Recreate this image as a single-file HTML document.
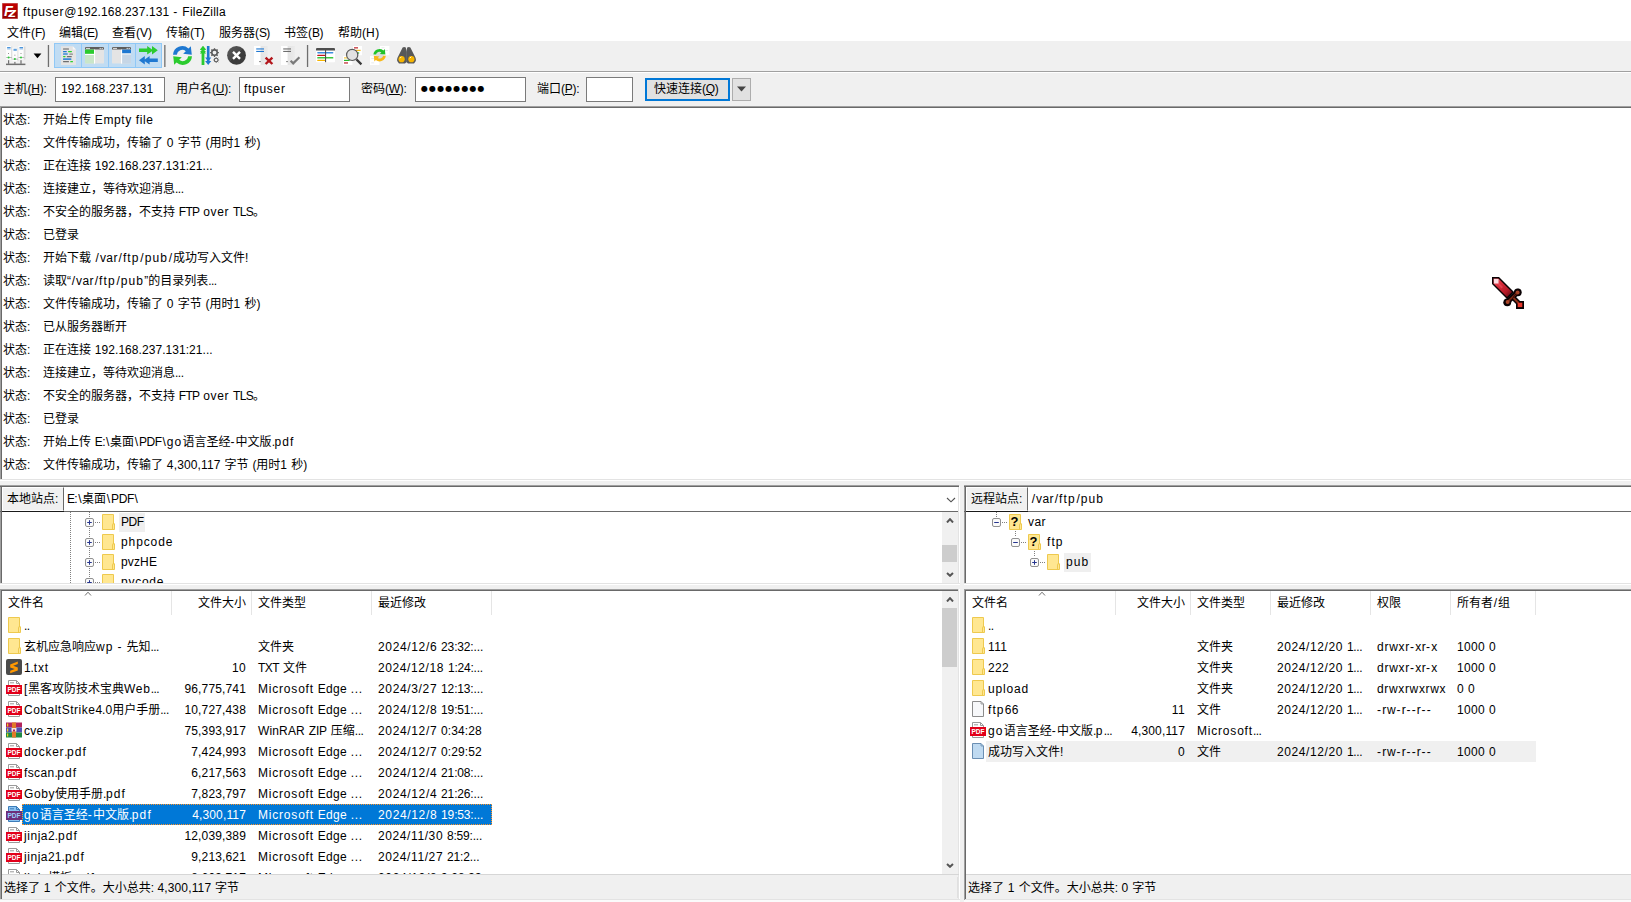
<!DOCTYPE html>
<html lang="zh-CN"><head><meta charset="utf-8"><title>ftpuser@192.168.237.131 - FileZilla</title>
<style>
html,body{margin:0;padding:0}
body{width:1631px;height:902px;position:relative;overflow:hidden;background:#f0f0f0;font-family:"Liberation Sans","Noto Sans CJK SC",sans-serif;font-size:12px;color:#000;line-height:16px}
div,span.t,svg{position:absolute;box-sizing:border-box}
span.t{white-space:nowrap;height:16px;word-spacing:0.5px}
i{font-style:normal}
u{text-decoration:underline;text-underline-offset:1px}
</style></head><body>
<div style="left:0px;top:0px;width:1631px;height:41px;background:#fff;"></div>
<svg style="left:2px;top:3px" width="16" height="16" viewBox="0 0 16 16"><defs><linearGradient id="fzg" x1="0" y1="0" x2="0" y2="1"><stop offset="0" stop-color="#c40000"/><stop offset="1" stop-color="#930000"/></linearGradient></defs><rect x="0.5" y="0.5" width="15" height="15" fill="url(#fzg)" stroke="#a80a0a" stroke-dasharray="1 1"/><g font-family="'Liberation Sans',sans-serif" font-weight="bold" font-style="italic" fill="#fff"><text x="2.100" y="12.600" font-size="14.500">F</text><text transform="translate(6.200 13.800) scale(1.180 1)" font-size="13.600">z</text></g></svg>
<span class="t" style="top:4px;left:23px;"><i style="letter-spacing:0.65px">ftpuser@</i><i style="letter-spacing:0.15px">192.168.237.131</i> <i style="letter-spacing:1.2px">-</i> <i style="letter-spacing:0.25px">FileZilla</i></span>
<span class="t" style="top:25px;left:7px;">文件<i style="letter-spacing:-0.05px">(</i><i style="letter-spacing:-0.7px">F</i><i style="letter-spacing:-0.05px">)</i></span>
<span class="t" style="top:25px;left:59px;">编辑<i style="letter-spacing:-0.05px">(</i><i style="letter-spacing:-0.7px">E</i><i style="letter-spacing:-0.05px">)</i></span>
<span class="t" style="top:25px;left:112px;">查看<i style="letter-spacing:-0.05px">(</i><i style="letter-spacing:0.1px">V</i><i style="letter-spacing:-0.05px">)</i></span>
<span class="t" style="top:25px;left:166px;">传输<i style="letter-spacing:-0.05px">(</i><i style="letter-spacing:-0.5px">T</i><i style="letter-spacing:-0.05px">)</i></span>
<span class="t" style="top:25px;left:219px;">服务器<i style="letter-spacing:-0.05px">(</i><i style="letter-spacing:-0.7px">S</i><i style="letter-spacing:-0.05px">)</i></span>
<span class="t" style="top:25px;left:284px;">书签<i style="letter-spacing:-0.05px">(</i><i style="letter-spacing:-0.55px">B</i><i style="letter-spacing:-0.05px">)</i></span>
<span class="t" style="top:25px;left:338px;">帮助<i style="letter-spacing:-0.05px">(</i><i style="letter-spacing:0.6px">H</i><i style="letter-spacing:-0.05px">)</i></span>
<div style="left:0px;top:41px;width:1631px;height:30px;background:#f0f0f0;"></div>
<div style="left:0px;top:71px;width:1631px;height:1px;background:#a0a0a0;"></div>
<div style="left:0px;top:72px;width:1631px;height:1px;background:#fff;"></div>
<div style="left:54px;top:43px;width:108px;height:25px;background:#c0dcf3;border:1px solid #90c8f6;"></div>
<div style="left:80.5px;top:43px;width:1.5px;height:25px;background:#90c8f6;"></div>
<div style="left:107.5px;top:43px;width:1.5px;height:25px;background:#90c8f6;"></div>
<div style="left:134.5px;top:43px;width:1.5px;height:25px;background:#90c8f6;"></div>
<svg style="left:0;top:41px" width="430" height="30" viewBox="0 41 430 30"><defs><linearGradient id="sv" x1="0" x2="1" y1="0" y2="0"><stop offset="0.45" stop-color="#fff"/><stop offset="0.5" stop-color="#e4e4e4"/><stop offset="1" stop-color="#ebebeb"/></linearGradient><linearGradient id="cg" x1="0" x2="1" y1="0" y2="1"><stop offset="0" stop-color="#5a5a5a"/><stop offset="0.5" stop-color="#4a4a4a"/><stop offset="0.5" stop-color="#3c3c3c"/><stop offset="1" stop-color="#3a3a3a"/></linearGradient></defs><rect x="47.8" y="45" width="1.3" height="22" fill="#6e6e6e"/><rect x="164.2" y="45" width="1.3" height="22" fill="#6e6e6e"/><rect x="306.9" y="45" width="1.3" height="22" fill="#6e6e6e"/><rect x="11.1" y="46.5" width="1.2" height="13" fill="#dadada"/><rect x="6.1" y="46" width="5" height="13.500" fill="#fdfdfd"/><rect x="7.1" y="47.1" width="3.5" height="1" fill="#3a8ad6"/><rect x="7.1" y="48.5" width="3.5" height="0.8" fill="#5a9ee0"/><rect x="8.2" y="53" width="0.8" height="1" fill="#777"/><rect x="6.1" y="57" width="5.8" height="0.9" fill="#b4b4b4"/><circle cx="8.6" cy="57.4" r="1" fill="#2ec83a"/><rect x="8.0" y="60.2" width="1.200" height="3.6" fill="#707070"/><rect x="17.3" y="48.2" width="1.2" height="13" fill="#dadada"/><rect x="12.5" y="47.7" width="4.8" height="13.500" fill="#fdfdfd"/><rect x="13.5" y="48.800000000000004" width="3.3" height="1" fill="#3a8ad6"/><rect x="13.5" y="50.2" width="3.3" height="0.8" fill="#5a9ee0"/><rect x="14.5" y="54.7" width="0.8" height="1" fill="#777"/><rect x="12.5" y="58.7" width="5.6" height="0.9" fill="#b4b4b4"/><circle cx="14.9" cy="59.1" r="1" fill="#2ec83a"/><rect x="14.3" y="61.900000000000006" width="1.200" height="1.9" fill="#707070"/><rect x="23.5" y="46.5" width="2" height="13" fill="#dadada"/><rect x="18.5" y="46" width="5" height="13.500" fill="#fdfdfd"/><rect x="19.5" y="47.1" width="3.5" height="1" fill="#3a8ad6"/><rect x="19.5" y="48.5" width="3.5" height="0.8" fill="#5a9ee0"/><rect x="20.6" y="53" width="0.8" height="1" fill="#777"/><rect x="18.5" y="57" width="5.8" height="0.9" fill="#b4b4b4"/><circle cx="21.0" cy="57.4" r="1" fill="#2ec83a"/><rect x="20.4" y="60.2" width="1.200" height="3.6" fill="#707070"/><rect x="6" y="63.600" width="19.400" height="1.500" fill="#707070"/><path d="M33.600 53.600h7.800l-3.900 4.600z" fill="#000"/><path d="M61 46.200h11.800l3.200 3.200v15.600H61z" fill="#e4e4e4"/><path d="M72.800 46.200v3.200H76z" fill="#f8f8f8"/><rect x="63" y="48.300" width="6" height="1.500" rx="0.5" fill="#8a8a8a"/><rect x="63" y="50.900" width="3.800" height="1.300" rx="0.5" fill="#1f78d1"/><rect x="68" y="50.900" width="4" height="1.300" rx="0.6" fill="#2bd02f"/><rect x="63" y="53.200" width="4.800" height="1.600" rx="0.5" fill="#3a8ad6"/><rect x="69.300" y="53.400" width="3.700" height="1.400" rx="0.5" fill="#8a8a8a"/><rect x="63" y="55.900" width="2.600" height="1.300" rx="0.6" fill="#2bd02f"/><rect x="66.800" y="55.900" width="5" height="1.300" rx="0.5" fill="#6e6e6e"/><rect x="63" y="58.300" width="8.400" height="1.600" rx="0.5" fill="#3a8ad6"/><rect x="63" y="61" width="6" height="1.300" rx="0.5" fill="#6e6e6e"/><rect x="70.200" y="61" width="2.800" height="1.300" rx="0.6" fill="#2bd02f"/><rect x="85" y="47" width="19" height="16.600" rx="1.200" fill="#e4e4e4"/><path d="M85 49.600v-1.400q0-1.200 1.200-1.200h16.600q1.200 0 1.200 1.200v1.400z" fill="#5c5c5c"/><rect x="86" y="47.900" width="4" height="0.900" fill="#eee"/><rect x="99.500" y="47.900" width="1.500" height="0.900" fill="#ddd"/><rect x="101.500" y="47.900" width="1.500" height="0.900" fill="#ddd"/><rect x="85" y="49.600" width="9" height="4.300" fill="#2bcb2f"/><rect x="85" y="53.900" width="9" height="1.100" fill="#fff"/><path d="M85 55h9v8.600h-7.800q-1.200 0-1.200-1.200z" fill="#c9e6c9"/><rect x="94" y="49.600" width="1.100" height="14" fill="#fff"/><rect x="112" y="47" width="19" height="16.600" rx="1.200" fill="#e4e4e4"/><path d="M112 49.600v-1.400q0-1.200 1.200-1.200h16.600q1.200 0 1.200 1.200v1.400z" fill="#5c5c5c"/><rect x="113" y="47.900" width="4" height="0.900" fill="#eee"/><rect x="126.500" y="47.900" width="1.500" height="0.900" fill="#ddd"/><rect x="128.500" y="47.900" width="1.500" height="0.900" fill="#ddd"/><rect x="122" y="49.600" width="9" height="3.900" fill="#1f78d1"/><rect x="122" y="53.500" width="9" height="1.100" fill="#fff"/><path d="M122 54.600h9v7.800q0 1.200-1.200 1.200H122z" fill="#c6d6e6"/><rect x="121" y="49.600" width="1.100" height="14" fill="#fff"/><path d="M139 48.600h8.200v-2.600l4.800 3.400v-3.400l5.800 4.300-5.800 4.300v-3.400l-4.800 3.400v-2.600h-8.200z" fill="#2bcb2f"/><path d="M157.800 58.600h-8.200v-2.600l-4.800 3.400v-3.400l-5.800 4.300 5.800 4.300v-3.400l4.800 3.400v-2.600h8.200z" fill="#1f78d1"/><path d="M173 54.800a9.300 9.300 0 0 1 15.500-6.300l2.300-2.300 1 8.600-8.600-1 2.600-2.600a5.500 5.500 0 0 0-9 3.600z" fill="#1f78d1"/><path d="M192 56.200a9.300 9.300 0 0 1-15.500 6.300l-2.300 2.300-1-8.600 8.600 1-2.600 2.600a5.500 5.500 0 0 0 9-3.600z" fill="#2bcb2f"/><path d="M203 46l3 3.600h-1.600v2.400H206l-1.600-1.800v14.800h-2.800V50.200L200 52h1.600v-2.400H200z" fill="#2bcb2f"/><path d="M203 46l3.100 4h-6.200z M203 49.500l3.100 4h-6.200z" fill="#2bcb2f"/><rect x="206.900" y="46" width="2.600" height="15" fill="#1f78d1"/><path d="M208.200 65l-3.100-4h6.200z M208.200 61.500l-3.100-4h6.200z" fill="#1f78d1"/><circle cx="214.5" cy="52.6" r="2.73" fill="none" stroke="#5a5a5a" stroke-width="1.58"/><line x1="217.58" y1="52.60" x2="218.90" y2="52.60" stroke="#5a5a5a" stroke-width="1.32"/><line x1="216.68" y1="54.78" x2="217.61" y2="55.71" stroke="#5a5a5a" stroke-width="1.32"/><line x1="214.50" y1="55.68" x2="214.50" y2="57.00" stroke="#5a5a5a" stroke-width="1.32"/><line x1="212.32" y1="54.78" x2="211.39" y2="55.71" stroke="#5a5a5a" stroke-width="1.32"/><line x1="211.42" y1="52.60" x2="210.10" y2="52.60" stroke="#5a5a5a" stroke-width="1.32"/><line x1="212.32" y1="50.42" x2="211.39" y2="49.49" stroke="#5a5a5a" stroke-width="1.32"/><line x1="214.50" y1="49.52" x2="214.50" y2="48.20" stroke="#5a5a5a" stroke-width="1.32"/><line x1="216.68" y1="50.42" x2="217.61" y2="49.49" stroke="#5a5a5a" stroke-width="1.32"/><circle cx="216.2" cy="60" r="1.80" fill="none" stroke="#5a5a5a" stroke-width="1.04"/><line x1="218.23" y1="60.00" x2="219.10" y2="60.00" stroke="#5a5a5a" stroke-width="0.87"/><line x1="217.64" y1="61.44" x2="218.25" y2="62.05" stroke="#5a5a5a" stroke-width="0.87"/><line x1="216.20" y1="62.03" x2="216.20" y2="62.90" stroke="#5a5a5a" stroke-width="0.87"/><line x1="214.76" y1="61.44" x2="214.15" y2="62.05" stroke="#5a5a5a" stroke-width="0.87"/><line x1="214.17" y1="60.00" x2="213.30" y2="60.00" stroke="#5a5a5a" stroke-width="0.87"/><line x1="214.76" y1="58.56" x2="214.15" y2="57.95" stroke="#5a5a5a" stroke-width="0.87"/><line x1="216.20" y1="57.97" x2="216.20" y2="57.10" stroke="#5a5a5a" stroke-width="0.87"/><line x1="217.64" y1="58.56" x2="218.25" y2="57.95" stroke="#5a5a5a" stroke-width="0.87"/><circle cx="236.500" cy="55.300" r="9.400" fill="url(#cg)"/><path d="M233 51.800l7 7M240 51.800l-7 7" stroke="#fff" stroke-width="2.400" stroke-linecap="butt"/><rect x="254" y="46" width="13.800" height="19" fill="url(#sv)"/><rect x="256.200" y="48.400" width="7.800" height="1.100" fill="#1f78d1"/><rect x="256.200" y="50.900" width="7.800" height="1.100" fill="#1f78d1"/><circle cx="260" cy="61.600" r="0.700" fill="#333"/><path d="M265.600 57.600l6.800 6.400M272.400 57.600l-6.800 6.400" stroke="#b3151b" stroke-width="2.400"/><rect x="281" y="46" width="13.800" height="19" fill="url(#sv)"/><rect x="283.200" y="48.400" width="7.800" height="1.100" fill="#6e6e6e"/><rect x="283.200" y="50.900" width="7.800" height="1.100" fill="#6e6e6e"/><circle cx="287" cy="61.600" r="0.700" fill="#333"/><path d="M290.600 60.800l2.600 2.600 6.200-6.200" stroke="#7a7a7a" stroke-width="2.200" fill="none"/><rect x="316" y="48" width="19" height="14.200" rx="0.800" fill="#fff"/><path d="M316 50.600v-1.600q0-1 1-1h17q1 0 1 1v1.600z" fill="#4e4e4e"/><rect x="317.200" y="52" width="16.200" height="1.500" rx="0.700" fill="#3a8ee0"/><rect x="317.200" y="54.700" width="8" height="1.300" rx="0.600" fill="#c4161c"/><rect x="317.200" y="57.100" width="16.200" height="1.500" rx="0.700" fill="#3cc83f"/><rect x="317.200" y="59.800" width="8" height="1.300" rx="0.600" fill="#f7b400"/><rect x="325" y="50" width="1.100" height="12.200" fill="#4e4e4e"/><rect x="353" y="46" width="9" height="9.200" fill="#fff"/><rect x="354" y="47.200" width="4" height="1.300" fill="#c4343a"/><rect x="356" y="49.800" width="4.600" height="1.100" fill="#f7b400"/><rect x="357" y="52.300" width="2.200" height="1.300" fill="#3cc83f"/><rect x="343" y="56" width="9.400" height="9" fill="#fff"/><rect x="344" y="57.300" width="3" height="1.200" fill="#f7c840"/><rect x="344" y="59.800" width="5.600" height="1.200" fill="#2bb82f"/><rect x="344" y="62.300" width="4" height="1.300" fill="#c4343a"/><circle cx="352.200" cy="54.900" r="5.600" fill="#e2e2e2" stroke="#5a5a5a" stroke-width="1.200"/><path d="M356.400 59.400l5 5" stroke="#3a3a3a" stroke-width="2.200"/><rect x="380" y="46" width="9.400" height="9.200" fill="#fff"/><rect x="381.500" y="47.400" width="3" height="0.800" fill="#e4e4e4"/><rect x="385" y="50" width="3" height="0.800" fill="#e4e4e4"/><rect x="370" y="56" width="9.400" height="9" fill="#fff"/><rect x="371.200" y="58" width="3" height="0.800" fill="#e4e4e4"/><rect x="371.200" y="62.500" width="3" height="0.800" fill="#e4e4e4"/><circle cx="379.600" cy="55.200" r="4" fill="#dcdcdc"/><path d="M373.400 54.600a6.200 6.200 0 0 1 10-4.200l1.400-1.400.6 5.600-5.600-.6 1.600-1.600a3.600 3.600 0 0 0-5.400 2.200z" fill="#22c32a"/><path d="M385.800 55.800a6.200 6.200 0 0 1-10 4.200l-1.400 1.400-.6-5.600 5.600.6-1.600 1.600a3.600 3.600 0 0 0 5.400-2.200z" fill="#f7b818"/><path d="M402.600 47.600Q404.200 46.600 405.800 47.600L406.700 52V62L405 63.400H399L397.200 61Q396.800 59 397.600 57.400Z" fill="#585858"/><path d="M410.400 47.600Q408.800 46.600 407.200 47.600L406.300 52V62L408 63.400H414L415.800 61Q416.200 59 415.400 57.400Z" fill="#585858"/><circle cx="401.600" cy="59.200" r="3.100" fill="#f7b500"/><circle cx="411.400" cy="59.200" r="3.100" fill="#f7b500"/><path d="M400 58.200l1.400-1.400M409.800 58.200l1.400-1.400" stroke="#fff" stroke-width="0.900"/></svg>
<span class="t" style="top:81px;left:3.5px;">主机<i style="letter-spacing:-0.25px">(<u>H</u>):</i></span>
<div style="left:55px;top:77px;width:110px;height:25px;background:#fff;border:1px solid #7a7a7a;"></div>
<span class="t" style="top:81px;left:61px;"><i style="letter-spacing:0.15px">192.168.237.131</i></span>
<span class="t" style="top:81px;left:176px;">用户名<i style="letter-spacing:-0.25px">(<u>U</u>):</i></span>
<div style="left:239px;top:77px;width:111px;height:25px;background:#fff;border:1px solid #7a7a7a;"></div>
<span class="t" style="top:81px;left:244px;"><i style="letter-spacing:0.7px">ftpuser</i></span>
<span class="t" style="top:81px;left:361px;">密码<i style="letter-spacing:-0.25px">(<u>W</u>):</i></span>
<div style="left:415px;top:77px;width:111px;height:25px;background:#fff;border:1px solid #7a7a7a;"></div>
<span class="t" style="top:80.5px;left:421px;font-size:8px;letter-spacing:1.1px;font-family:'DejaVu Sans',sans-serif;">●●●●●●●●</span>
<span class="t" style="top:81px;left:537px;">端口<i style="letter-spacing:-0.25px">(<u>P</u>):</i></span>
<div style="left:586px;top:77px;width:47px;height:25px;background:#fff;border:1px solid #7a7a7a;"></div>
<div style="left:645px;top:78px;width:85px;height:23px;background:#e1e1e1;border:2px solid #0078d7;"></div>
<span class="t" style="top:81px;left:654px;">快速连接<i style="letter-spacing:-0.25px">(<u>Q</u>)</i></span>
<div style="left:732px;top:78px;width:19px;height:23px;background:#e1e1e1;border:1px solid #adadad;"></div>
<svg style="left:736px;top:86px" width="11" height="6" viewBox="0 0 11 6"><path d="M1 0.5h9L5.5 5.5z" fill="#444"/></svg>
<div style="left:0px;top:106px;width:1631px;height:1px;background:#a0a0a0;"></div>
<div style="left:0px;top:107px;width:1631px;height:1px;background:#696969;"></div>
<div style="left:0px;top:107px;width:1px;height:372px;background:#a0a0a0;"></div>
<div style="left:1px;top:108px;width:1px;height:371px;background:#696969;"></div>
<div style="left:2px;top:108px;width:1629px;height:371px;background:#fff;"></div>
<span class="t" style="top:112px;left:3px;">状态<i style="letter-spacing:-0.5px">:</i></span>
<span class="t" style="top:112px;left:43px;">开始上传 <i style="letter-spacing:0.6px">Empty</i> <i style="letter-spacing:0.6px">file</i></span>
<span class="t" style="top:135px;left:3px;">状态<i style="letter-spacing:-0.5px">:</i></span>
<span class="t" style="top:135px;left:43px;">文件传输成功，传输了 <i style="letter-spacing:0.35px">0</i> 字节 <i style="letter-spacing:-0.05px">(</i>用时<i style="letter-spacing:0.35px">1</i> 秒<i style="letter-spacing:-0.05px">)</i></span>
<span class="t" style="top:158px;left:3px;">状态<i style="letter-spacing:-0.5px">:</i></span>
<span class="t" style="top:158px;left:43px;">正在连接 <i style="letter-spacing:0.05px">192.168.237.131:21...</i></span>
<span class="t" style="top:181px;left:3px;">状态<i style="letter-spacing:-0.5px">:</i></span>
<span class="t" style="top:181px;left:43px;">连接建立，等待欢迎消息<i style="letter-spacing:-0.5px">...</i></span>
<span class="t" style="top:204px;left:3px;">状态<i style="letter-spacing:-0.5px">:</i></span>
<span class="t" style="top:204px;left:43px;">不安全的服务器，不支持 <i style="letter-spacing:-0.7px">FTP</i> <i style="letter-spacing:0.65px">over</i> <i style="letter-spacing:-0.7px">TLS</i>。</span>
<span class="t" style="top:227px;left:3px;">状态<i style="letter-spacing:-0.5px">:</i></span>
<span class="t" style="top:227px;left:43px;">已登录</span>
<span class="t" style="top:250px;left:3px;">状态<i style="letter-spacing:-0.5px">:</i></span>
<span class="t" style="top:250px;left:43px;">开始下载 <i style="letter-spacing:1.75px;margin:0 -0.7px 0 0.7px">/</i><i style="letter-spacing:0.4px">var</i><i style="letter-spacing:1.75px;margin:0 -0.7px 0 0.7px">/</i><i style="letter-spacing:1.1px">ftp</i><i style="letter-spacing:1.75px;margin:0 -0.7px 0 0.7px">/</i><i style="letter-spacing:1.1px">pub</i><i style="letter-spacing:1.75px;margin:0 -0.7px 0 0.7px">/</i>成功写入文件<i style="letter-spacing:0.35px">!</i></span>
<span class="t" style="top:273px;left:3px;">状态<i style="letter-spacing:-0.5px">:</i></span>
<span class="t" style="top:273px;left:43px;">读取“<i style="letter-spacing:1.75px;margin:0 -0.7px 0 0.7px">/</i><i style="letter-spacing:0.4px">var</i><i style="letter-spacing:1.75px;margin:0 -0.7px 0 0.7px">/</i><i style="letter-spacing:1.1px">ftp</i><i style="letter-spacing:1.75px;margin:0 -0.7px 0 0.7px">/</i><i style="letter-spacing:1.1px">pub</i>”的目录列表<i style="letter-spacing:-0.5px">...</i></span>
<span class="t" style="top:296px;left:3px;">状态<i style="letter-spacing:-0.5px">:</i></span>
<span class="t" style="top:296px;left:43px;">文件传输成功，传输了 <i style="letter-spacing:0.35px">0</i> 字节 <i style="letter-spacing:-0.05px">(</i>用时<i style="letter-spacing:0.35px">1</i> 秒<i style="letter-spacing:-0.05px">)</i></span>
<span class="t" style="top:319px;left:3px;">状态<i style="letter-spacing:-0.5px">:</i></span>
<span class="t" style="top:319px;left:43px;">已从服务器断开</span>
<span class="t" style="top:342px;left:3px;">状态<i style="letter-spacing:-0.5px">:</i></span>
<span class="t" style="top:342px;left:43px;">正在连接 <i style="letter-spacing:0.05px">192.168.237.131:21...</i></span>
<span class="t" style="top:365px;left:3px;">状态<i style="letter-spacing:-0.5px">:</i></span>
<span class="t" style="top:365px;left:43px;">连接建立，等待欢迎消息<i style="letter-spacing:-0.5px">...</i></span>
<span class="t" style="top:388px;left:3px;">状态<i style="letter-spacing:-0.5px">:</i></span>
<span class="t" style="top:388px;left:43px;">不安全的服务器，不支持 <i style="letter-spacing:-0.7px">FTP</i> <i style="letter-spacing:0.65px">over</i> <i style="letter-spacing:-0.7px">TLS</i>。</span>
<span class="t" style="top:411px;left:3px;">状态<i style="letter-spacing:-0.5px">:</i></span>
<span class="t" style="top:411px;left:43px;">已登录</span>
<span class="t" style="top:434px;left:3px;">状态<i style="letter-spacing:-0.5px">:</i></span>
<span class="t" style="top:434px;left:43px;">开始上传 <i style="letter-spacing:-0.7px">E</i><i style="letter-spacing:0.55px">:\</i>桌面<i style="letter-spacing:1.6px;margin:0 -0.7px 0 0.7px">\</i><i style="letter-spacing:-0.4px">PDF</i><i style="letter-spacing:1.6px;margin:0 -0.7px 0 0.7px">\</i><i style="letter-spacing:1.2px">go</i>语言圣经<i style="letter-spacing:1.2px">-</i>中文版<i style="letter-spacing:-0.5px">.</i><i style="letter-spacing:1.1px">pdf</i></span>
<span class="t" style="top:457px;left:3px;">状态<i style="letter-spacing:-0.5px">:</i></span>
<span class="t" style="top:457px;left:43px;">文件传输成功，传输了 <i style="letter-spacing:0.15px">4,300,117</i> 字节 <i style="letter-spacing:-0.05px">(</i>用时<i style="letter-spacing:0.35px">1</i> 秒<i style="letter-spacing:-0.05px">)</i></span>
<svg style="left:1490px;top:275px" width="36" height="36" viewBox="0 0 36 36"><defs><linearGradient id="bl" x1="0" y1="0" x2="1" y2="1"><stop offset="0" stop-color="#f4707c"/><stop offset="0.3" stop-color="#dc2f3c"/><stop offset="0.7" stop-color="#b41a28"/><stop offset="1" stop-color="#4e060e"/></linearGradient></defs><path d="M2 2h7l15 15-7 7L2 9z" fill="#0a0204"/><path d="M3.500 3.500h4.900L22 17l-5 5L3.500 8.400z" fill="url(#bl)"/><path d="M5 4l8 8-1.500 1.500L4 5.500z" fill="#ee5260" opacity="0.6"/><rect x="4" y="4" width="4.500" height="4.500" fill="#fcdde2"/><path d="M16.500 27.700L28.100 16.600" stroke="#0a0204" stroke-width="5.500" stroke-linecap="round"/><circle cx="17.300" cy="27.300" r="3.900" fill="#0a0204"/><circle cx="27.800" cy="17.300" r="3.900" fill="#0a0204"/><path d="M23 22.500l7 7" stroke="#0a0204" stroke-width="5"/><rect x="26" y="26" width="8" height="8" fill="#0a0204"/><path d="M17.500 27L27.500 17.500" stroke="#7a2814" stroke-width="2" stroke-linecap="round"/><circle cx="17.600" cy="27" r="2" fill="#a84428"/><circle cx="27.600" cy="17.500" r="2" fill="#a84428"/><path d="M20 25.500q3-1 3.500-3.500t3-3" stroke="#3a0c06" stroke-width="1" fill="none"/><path d="M23.500 23l5 5" stroke="#8c3018" stroke-width="2"/><rect x="27.700" y="27.700" width="4.600" height="4.400" fill="#e8382c"/></svg>
<div style="left:0px;top:479px;width:1631px;height:1px;background:#e3e3e3;"></div>
<div style="left:0px;top:480px;width:1631px;height:1px;background:#fff;"></div>
<div style="left:0px;top:481px;width:1631px;height:4px;background:#f0f0f0;"></div>
<div style="left:0px;top:485px;width:959px;height:1px;background:#a0a0a0;"></div>
<div style="left:0px;top:486px;width:959px;height:1px;background:#696969;"></div>
<div style="left:0px;top:487px;width:1px;height:413px;background:#a0a0a0;"></div>
<div style="left:1px;top:487px;width:1px;height:412px;background:#696969;"></div>
<div style="left:2px;top:487px;width:62px;height:24px;background:#f0f0f0;border-left:1px solid #fff;border-top:1px solid #fff;border-bottom:1px solid #fff;border-right:1px solid #696969;"></div>
<div style="left:64px;top:487px;width:894px;height:24px;background:#fff;"></div>
<div style="left:0px;top:511px;width:959px;height:1px;background:#696969;"></div>
<div style="left:2px;top:511px;width:62px;height:1px;background:#1a1a1a;"></div>
<div style="left:958px;top:487px;width:1px;height:413px;background:#e3e3e3;"></div>
<div style="left:959px;top:486px;width:1px;height:414px;background:#fff;"></div>
<span class="t" style="top:491px;left:7px;">本地站点<i style="letter-spacing:-0.5px">:</i></span>
<span class="t" style="top:491px;left:67px;"><i style="letter-spacing:-0.7px">E</i><i style="letter-spacing:0.55px">:\</i>桌面<i style="letter-spacing:1.6px;margin:0 -0.7px 0 0.7px">\</i><i style="letter-spacing:-0.4px">PDF</i><i style="letter-spacing:1.6px;margin:0 -0.7px 0 0.7px">\</i></span>
<svg style="left:946px;top:497px" width="10" height="6.0" viewBox="0 0 10 6.0"><path d="M1 1L5.0 4.8L9 1" fill="none" stroke="#505050" stroke-width="1.1"/></svg>
<div style="left:0px;top:512px;width:2px;height:71px;border-left:1px solid #a0a0a0;background:#696969;"></div>
<div style="left:2px;top:512px;width:940px;height:71px;background:#fff;"></div>
<div style="left:0px;top:583px;width:959px;height:1px;background:#e3e3e3;"></div>
<div style="left:0px;top:584px;width:959px;height:1px;background:#fff;"></div>
<div style="left:942px;top:512px;width:16px;height:71px;background:#f0f0f0;"></div>
<div style="left:942px;top:545px;width:15px;height:17px;background:#cdcdcd;"></div>
<svg style="left:945.5px;top:517.5px" width="8" height="5.0" viewBox="0 0 8 5.0"><path d="M1 4.5L4.0 1.2L7 4.5" fill="none" stroke="#555" stroke-width="2"/></svg>
<svg style="left:945.5px;top:571.5px" width="8" height="5.0" viewBox="0 0 8 5.0"><path d="M1 1L4.0 3.8L7 1" fill="none" stroke="#555" stroke-width="2"/></svg>
<div style="left:70px;top:512px;width:1px;height:71px;background:repeating-linear-gradient(to bottom,#808080 0 1px,transparent 1px 2px);"></div>
<div style="left:89px;top:512px;width:1px;height:71px;background:repeating-linear-gradient(to bottom,#808080 0 1px,transparent 1px 2px);"></div>
<div style="left:2px;top:512px;width:940px;height:71px;overflow:hidden">
<div style="left:117px;top:0.5px;width:26px;height:19px;background:#efefef;"></div>
<div style="left:85px;top:5.5px;width:10px;height:10px;background:#fff;"></div>
<svg style="left:83px;top:6.0px" width="9" height="9" viewBox="0 0 9 9"><rect x="0.500" y="0.500" width="8" height="8" rx="1.500" fill="#fafafa" stroke="#919191"/><path d="M2.200 4.500h4.600" stroke="#26358f" stroke-width="1"/><path d="M4.500 2.200v4.600" stroke="#26358f" stroke-width="1"/></svg>
<div style="left:93px;top:10.0px;width:6px;height:1px;background:repeating-linear-gradient(to right,#808080 0 1px,transparent 1px 2px);"></div>
<svg style="left:100px;top:2.0px" width="13" height="16" viewBox="0 0 13 16"><path d="M0.5 0.5h11v9.500h1v5.500h-12z" fill="#ffe791" stroke="#eec94e" stroke-width="1"/><path d="M10.500 15.500v-5q0-.8 .8-.8h1.200" fill="none" stroke="#eec94e"/></svg>
<span class="t" style="left:119px;top:2.0px"><i style="letter-spacing:-0.4px">PDF</i></span>
<div style="left:85px;top:25.5px;width:10px;height:10px;background:#fff;"></div>
<svg style="left:83px;top:26.0px" width="9" height="9" viewBox="0 0 9 9"><rect x="0.500" y="0.500" width="8" height="8" rx="1.500" fill="#fafafa" stroke="#919191"/><path d="M2.200 4.500h4.600" stroke="#26358f" stroke-width="1"/><path d="M4.500 2.200v4.600" stroke="#26358f" stroke-width="1"/></svg>
<div style="left:93px;top:30.0px;width:6px;height:1px;background:repeating-linear-gradient(to right,#808080 0 1px,transparent 1px 2px);"></div>
<svg style="left:100px;top:22.0px" width="13" height="16" viewBox="0 0 13 16"><path d="M0.5 0.5h11v9.500h1v5.500h-12z" fill="#ffe791" stroke="#eec94e" stroke-width="1"/><path d="M10.500 15.500v-5q0-.8 .8-.8h1.200" fill="none" stroke="#eec94e"/></svg>
<span class="t" style="left:119px;top:22.0px"><i style="letter-spacing:0.9px">phpcode</i></span>
<div style="left:85px;top:45.5px;width:10px;height:10px;background:#fff;"></div>
<svg style="left:83px;top:46.0px" width="9" height="9" viewBox="0 0 9 9"><rect x="0.500" y="0.500" width="8" height="8" rx="1.500" fill="#fafafa" stroke="#919191"/><path d="M2.200 4.500h4.600" stroke="#26358f" stroke-width="1"/><path d="M4.500 2.200v4.600" stroke="#26358f" stroke-width="1"/></svg>
<div style="left:93px;top:50.0px;width:6px;height:1px;background:repeating-linear-gradient(to right,#808080 0 1px,transparent 1px 2px);"></div>
<svg style="left:100px;top:42.0px" width="13" height="16" viewBox="0 0 13 16"><path d="M0.5 0.5h11v9.500h1v5.500h-12z" fill="#ffe791" stroke="#eec94e" stroke-width="1"/><path d="M10.500 15.500v-5q0-.8 .8-.8h1.200" fill="none" stroke="#eec94e"/></svg>
<span class="t" style="left:119px;top:42.0px"><i style="letter-spacing:0.15px">pvzHE</i></span>
<div style="left:85px;top:65.5px;width:10px;height:10px;background:#fff;"></div>
<svg style="left:83px;top:66.0px" width="9" height="9" viewBox="0 0 9 9"><rect x="0.500" y="0.500" width="8" height="8" rx="1.500" fill="#fafafa" stroke="#919191"/><path d="M2.200 4.500h4.600" stroke="#26358f" stroke-width="1"/><path d="M4.500 2.200v4.600" stroke="#26358f" stroke-width="1"/></svg>
<div style="left:93px;top:70.0px;width:6px;height:1px;background:repeating-linear-gradient(to right,#808080 0 1px,transparent 1px 2px);"></div>
<svg style="left:100px;top:62.0px" width="13" height="16" viewBox="0 0 13 16"><path d="M0.5 0.5h11v9.500h1v5.500h-12z" fill="#ffe791" stroke="#eec94e" stroke-width="1"/><path d="M10.500 15.500v-5q0-.8 .8-.8h1.200" fill="none" stroke="#eec94e"/></svg>
<span class="t" style="left:119px;top:62.0px"><i style="letter-spacing:0.75px">pycode</i></span>
</div>
<div style="left:0px;top:585px;width:1631px;height:4px;background:#f0f0f0;"></div>
<div style="left:0px;top:589px;width:959px;height:1px;background:#a0a0a0;"></div>
<div style="left:0px;top:590px;width:959px;height:1px;background:#696969;"></div>
<div style="left:0px;top:589px;width:1px;height:310px;background:#a0a0a0;"></div>
<div style="left:1px;top:590px;width:1px;height:309px;background:#696969;"></div>
<div style="left:2px;top:591px;width:940px;height:283px;background:#fff;"></div>
<div style="left:2px;top:874px;width:957px;height:1px;background:#d6d6d6;"></div>
<div style="left:942px;top:591px;width:16px;height:283px;background:#f0f0f0;"></div>
<div style="left:942px;top:608px;width:15px;height:59px;background:#cdcdcd;"></div>
<svg style="left:945.5px;top:596.5px" width="8" height="5.0" viewBox="0 0 8 5.0"><path d="M1 4.5L4.0 1.2L7 4.5" fill="none" stroke="#555" stroke-width="2"/></svg>
<svg style="left:945.5px;top:862.5px" width="8" height="5.0" viewBox="0 0 8 5.0"><path d="M1 1L4.0 3.8L7 1" fill="none" stroke="#555" stroke-width="2"/></svg>
<div style="left:171px;top:591px;width:1px;height:24px;background:#e5e5e5;"></div>
<div style="left:251px;top:591px;width:1px;height:24px;background:#e5e5e5;"></div>
<div style="left:371px;top:591px;width:1px;height:24px;background:#e5e5e5;"></div>
<div style="left:491px;top:591px;width:1px;height:24px;background:#e5e5e5;"></div>
<svg style="left:84px;top:591px" width="8" height="5.0" viewBox="0 0 8 5.0"><path d="M1 4.5L4.0 1.2L7 4.5" fill="none" stroke="#707070" stroke-width="1"/></svg>
<span class="t" style="top:595px;left:8px;">文件名</span>
<span class="t" style="top:595px;right:1385px;">文件大小</span>
<span class="t" style="top:595px;left:258px;">文件类型</span>
<span class="t" style="top:595px;left:378px;">最近修改</span>
<div style="left:2px;top:591px;width:940px;height:283px;overflow:hidden">
<svg style="left:6px;top:26px" width="13" height="16" viewBox="0 0 13 16"><path d="M0.5 0.5h11v9.500h1v5.500h-12z" fill="#ffe791" stroke="#eec94e" stroke-width="1"/><path d="M10.500 15.500v-5q0-.8 .8-.8h1.200" fill="none" stroke="#eec94e"/></svg>
<span class="t" style="left:22px;top:27px;"><i style="letter-spacing:-0.5px">..</i></span>
<svg style="left:6px;top:47px" width="13" height="16" viewBox="0 0 13 16"><path d="M0.5 0.5h11v9.500h1v5.500h-12z" fill="#ffe791" stroke="#eec94e" stroke-width="1"/><path d="M10.500 15.500v-5q0-.8 .8-.8h1.200" fill="none" stroke="#eec94e"/></svg>
<span class="t" style="left:22px;top:48px;">玄机应急响应<i style="letter-spacing:1.1px">wp</i> <i style="letter-spacing:1.2px">-</i> 先知<i style="letter-spacing:-0.5px">...</i></span>
<span class="t" style="left:256px;top:48px;">文件夹</span>
<span class="t" style="left:376px;top:48px;"><i style="letter-spacing:0.65px">2024/12/6</i> <i style="letter-spacing:-0.15px">23:32:...</i></span>
<svg style="left:4px;top:68px" width="16" height="16" viewBox="0 0 16 16"><rect width="16" height="16" rx="2" fill="#4b4b4b"/><path d="M11.800 2.600L4.200 5.400v3l4.600 1.700-4.600 1.700v2.400l7.600-2.800v-3L7.200 6.700l4.600-1.700z" fill="#ff9800"/></svg>
<span class="t" style="left:22px;top:69px;"><i style="letter-spacing:-0.1px">1.</i><i style="letter-spacing:0.85px">txt</i></span>
<span class="t" style="right:696px;top:69px;"><i style="letter-spacing:0.35px">10</i></span>
<span class="t" style="left:256px;top:69px;"><i style="letter-spacing:-0.5px">TXT</i> 文件</span>
<span class="t" style="left:376px;top:69px;"><i style="letter-spacing:0.6px">2024/12/18</i> <i style="letter-spacing:-0.2px">1:24:...</i></span>
<svg style="left:4px;top:89px" width="16" height="16" viewBox="0 0 16 16"><path d="M2.500 0.500h8l3 3v12h-11z" fill="#fff" stroke="#9a9a9a"/><path d="M10.500 0.500v3h3" fill="none" stroke="#9a9a9a"/><rect x="4" y="2.300" width="4" height="1" fill="#9a9a9a"/><rect x="0" y="5" width="16" height="9" fill="#e2001a"/><text x="8" y="12.300" font-family="'Liberation Sans',sans-serif" font-weight="bold" font-size="7.500" text-anchor="middle" fill="#fff" textLength="13" lengthAdjust="spacingAndGlyphs">PDF</text></svg>
<span class="t" style="left:22px;top:90px;"><i style="letter-spacing:0.6px">[</i>黑客攻防技术宝典<i style="letter-spacing:0.75px">Web</i><i style="letter-spacing:-0.5px">...</i></span>
<span class="t" style="right:696px;top:90px;"><i style="letter-spacing:0.15px">96,775,741</i></span>
<span class="t" style="left:256px;top:90px;"><i style="letter-spacing:0.8px">Microsoft</i> <i style="letter-spacing:0.3px">Edge</i> <i style="letter-spacing:0.7px">...</i></span>
<span class="t" style="left:376px;top:90px;"><i style="letter-spacing:0.65px">2024/3/27</i> <i style="letter-spacing:-0.15px">12:13:...</i></span>
<svg style="left:4px;top:110px" width="16" height="16" viewBox="0 0 16 16"><path d="M2.500 0.500h8l3 3v12h-11z" fill="#fff" stroke="#9a9a9a"/><path d="M10.500 0.500v3h3" fill="none" stroke="#9a9a9a"/><rect x="4" y="2.300" width="4" height="1" fill="#9a9a9a"/><rect x="0" y="5" width="16" height="9" fill="#e2001a"/><text x="8" y="12.300" font-family="'Liberation Sans',sans-serif" font-weight="bold" font-size="7.500" text-anchor="middle" fill="#fff" textLength="13" lengthAdjust="spacingAndGlyphs">PDF</text></svg>
<span class="t" style="left:22px;top:111px;"><i style="letter-spacing:0.5px">CobaltStrike</i><i style="letter-spacing:0.05px">4.0</i>用户手册<i style="letter-spacing:-0.5px">...</i></span>
<span class="t" style="right:696px;top:111px;"><i style="letter-spacing:0.15px">10,727,438</i></span>
<span class="t" style="left:256px;top:111px;"><i style="letter-spacing:0.8px">Microsoft</i> <i style="letter-spacing:0.3px">Edge</i> <i style="letter-spacing:0.7px">...</i></span>
<span class="t" style="left:376px;top:111px;"><i style="letter-spacing:0.65px">2024/12/8</i> <i style="letter-spacing:-0.15px">19:51:...</i></span>
<svg style="left:4px;top:131px" width="16" height="16" viewBox="0 0 16 16"><rect x="0" y="0.500" width="16" height="5" fill="#b3245c"/><rect x="0" y="5.500" width="16" height="5" fill="#4f4fb3"/><rect x="0" y="10.500" width="16" height="5" fill="#1f8a45"/><rect x="6" y="0.500" width="4" height="15" fill="#e07a28"/><rect x="5.500" y="6" width="5" height="3.500" fill="#f4e8e0"/><rect x="7" y="7.500" width="2" height="2" fill="#b3245c"/><rect x="1" y="1.500" width="1.200" height="3" fill="#f2d21c"/><rect x="1" y="6.500" width="1.200" height="3" fill="#f2d21c"/><rect x="1" y="11.500" width="1.200" height="3" fill="#f2d21c"/></svg>
<span class="t" style="left:22px;top:132px;"><i style="letter-spacing:0.3px">cve</i><i style="letter-spacing:-0.5px">.</i><i style="letter-spacing:0.6px">zip</i></span>
<span class="t" style="right:696px;top:132px;"><i style="letter-spacing:0.15px">75,393,917</i></span>
<span class="t" style="left:256px;top:132px;"><i style="letter-spacing:0.15px">WinRAR</i> <i style="letter-spacing:-0.15px">ZIP</i> 压缩<i style="letter-spacing:-0.5px">...</i></span>
<span class="t" style="left:376px;top:132px;"><i style="letter-spacing:0.65px">2024/12/7</i> <i style="letter-spacing:0.1px">0:34:28</i></span>
<svg style="left:4px;top:152px" width="16" height="16" viewBox="0 0 16 16"><path d="M2.500 0.500h8l3 3v12h-11z" fill="#fff" stroke="#9a9a9a"/><path d="M10.500 0.500v3h3" fill="none" stroke="#9a9a9a"/><rect x="4" y="2.300" width="4" height="1" fill="#9a9a9a"/><rect x="0" y="5" width="16" height="9" fill="#e2001a"/><text x="8" y="12.300" font-family="'Liberation Sans',sans-serif" font-weight="bold" font-size="7.500" text-anchor="middle" fill="#fff" textLength="13" lengthAdjust="spacingAndGlyphs">PDF</text></svg>
<span class="t" style="left:22px;top:153px;"><i style="letter-spacing:0.7px">docker</i><i style="letter-spacing:-0.5px">.</i><i style="letter-spacing:1.1px">pdf</i></span>
<span class="t" style="right:696px;top:153px;"><i style="letter-spacing:0.15px">7,424,993</i></span>
<span class="t" style="left:256px;top:153px;"><i style="letter-spacing:0.8px">Microsoft</i> <i style="letter-spacing:0.3px">Edge</i> <i style="letter-spacing:0.7px">...</i></span>
<span class="t" style="left:376px;top:153px;"><i style="letter-spacing:0.65px">2024/12/7</i> <i style="letter-spacing:0.1px">0:29:52</i></span>
<svg style="left:4px;top:173px" width="16" height="16" viewBox="0 0 16 16"><path d="M2.500 0.500h8l3 3v12h-11z" fill="#fff" stroke="#9a9a9a"/><path d="M10.500 0.500v3h3" fill="none" stroke="#9a9a9a"/><rect x="4" y="2.300" width="4" height="1" fill="#9a9a9a"/><rect x="0" y="5" width="16" height="9" fill="#e2001a"/><text x="8" y="12.300" font-family="'Liberation Sans',sans-serif" font-weight="bold" font-size="7.500" text-anchor="middle" fill="#fff" textLength="13" lengthAdjust="spacingAndGlyphs">PDF</text></svg>
<span class="t" style="left:22px;top:174px;"><i style="letter-spacing:0.35px">fscan</i><i style="letter-spacing:-0.5px">.</i><i style="letter-spacing:1.1px">pdf</i></span>
<span class="t" style="right:696px;top:174px;"><i style="letter-spacing:0.15px">6,217,563</i></span>
<span class="t" style="left:256px;top:174px;"><i style="letter-spacing:0.8px">Microsoft</i> <i style="letter-spacing:0.3px">Edge</i> <i style="letter-spacing:0.7px">...</i></span>
<span class="t" style="left:376px;top:174px;"><i style="letter-spacing:0.65px">2024/12/4</i> <i style="letter-spacing:-0.15px">21:08:...</i></span>
<svg style="left:4px;top:194px" width="16" height="16" viewBox="0 0 16 16"><path d="M2.500 0.500h8l3 3v12h-11z" fill="#fff" stroke="#9a9a9a"/><path d="M10.500 0.500v3h3" fill="none" stroke="#9a9a9a"/><rect x="4" y="2.300" width="4" height="1" fill="#9a9a9a"/><rect x="0" y="5" width="16" height="9" fill="#e2001a"/><text x="8" y="12.300" font-family="'Liberation Sans',sans-serif" font-weight="bold" font-size="7.500" text-anchor="middle" fill="#fff" textLength="13" lengthAdjust="spacingAndGlyphs">PDF</text></svg>
<span class="t" style="left:22px;top:195px;"><i style="letter-spacing:0.6px">Goby</i>使用手册<i style="letter-spacing:-0.5px">.</i><i style="letter-spacing:1.1px">pdf</i></span>
<span class="t" style="right:696px;top:195px;"><i style="letter-spacing:0.15px">7,823,797</i></span>
<span class="t" style="left:256px;top:195px;"><i style="letter-spacing:0.8px">Microsoft</i> <i style="letter-spacing:0.3px">Edge</i> <i style="letter-spacing:0.7px">...</i></span>
<span class="t" style="left:376px;top:195px;"><i style="letter-spacing:0.65px">2024/12/4</i> <i style="letter-spacing:-0.15px">21:26:...</i></span>
<div style="left:20px;top:213px;width:470px;height:21px;background:#0078d7;border:1px dotted #ff9226;"></div>
<svg style="left:4px;top:215px" width="16" height="16" viewBox="0 0 16 16"><path d="M2.500 0.500h8l3 3v12h-11z" fill="#8cc4f2" stroke="#3c7cb8"/><path d="M10.500 0.500v3h3" fill="none" stroke="#3c7cb8"/><rect x="4" y="2.300" width="4" height="1" fill="#3c7cb8"/><rect x="0" y="5" width="16" height="9" fill="#6c2f7a"/><text x="8" y="12.300" font-family="'Liberation Sans',sans-serif" font-weight="bold" font-size="7.500" text-anchor="middle" fill="#9ad2ff" textLength="13" lengthAdjust="spacingAndGlyphs">PDF</text></svg>
<span class="t" style="left:22px;top:216px;color:#fff;"><i style="letter-spacing:1.2px">go</i>语言圣经<i style="letter-spacing:1.2px">-</i>中文版<i style="letter-spacing:-0.5px">.</i><i style="letter-spacing:1.1px">pdf</i></span>
<span class="t" style="right:696px;top:216px;color:#fff;"><i style="letter-spacing:0.15px">4,300,117</i></span>
<span class="t" style="left:256px;top:216px;color:#fff;"><i style="letter-spacing:0.8px">Microsoft</i> <i style="letter-spacing:0.3px">Edge</i> <i style="letter-spacing:0.7px">...</i></span>
<span class="t" style="left:376px;top:216px;color:#fff;"><i style="letter-spacing:0.65px">2024/12/8</i> <i style="letter-spacing:-0.15px">19:53:...</i></span>
<svg style="left:4px;top:236px" width="16" height="16" viewBox="0 0 16 16"><path d="M2.500 0.500h8l3 3v12h-11z" fill="#fff" stroke="#9a9a9a"/><path d="M10.500 0.500v3h3" fill="none" stroke="#9a9a9a"/><rect x="4" y="2.300" width="4" height="1" fill="#9a9a9a"/><rect x="0" y="5" width="16" height="9" fill="#e2001a"/><text x="8" y="12.300" font-family="'Liberation Sans',sans-serif" font-weight="bold" font-size="7.500" text-anchor="middle" fill="#fff" textLength="13" lengthAdjust="spacingAndGlyphs">PDF</text></svg>
<span class="t" style="left:22px;top:237px;"><i style="letter-spacing:0.55px">jinja</i><i style="letter-spacing:-0.1px">2.</i><i style="letter-spacing:1.1px">pdf</i></span>
<span class="t" style="right:696px;top:237px;"><i style="letter-spacing:0.15px">12,039,389</i></span>
<span class="t" style="left:256px;top:237px;"><i style="letter-spacing:0.8px">Microsoft</i> <i style="letter-spacing:0.3px">Edge</i> <i style="letter-spacing:0.7px">...</i></span>
<span class="t" style="left:376px;top:237px;"><i style="letter-spacing:0.6px">2024/11/30</i> <i style="letter-spacing:-0.2px">8:59:...</i></span>
<svg style="left:4px;top:257px" width="16" height="16" viewBox="0 0 16 16"><path d="M2.500 0.500h8l3 3v12h-11z" fill="#fff" stroke="#9a9a9a"/><path d="M10.500 0.500v3h3" fill="none" stroke="#9a9a9a"/><rect x="4" y="2.300" width="4" height="1" fill="#9a9a9a"/><rect x="0" y="5" width="16" height="9" fill="#e2001a"/><text x="8" y="12.300" font-family="'Liberation Sans',sans-serif" font-weight="bold" font-size="7.500" text-anchor="middle" fill="#fff" textLength="13" lengthAdjust="spacingAndGlyphs">PDF</text></svg>
<span class="t" style="left:22px;top:258px;"><i style="letter-spacing:0.55px">jinja</i><i style="letter-spacing:0.05px">21.</i><i style="letter-spacing:1.1px">pdf</i></span>
<span class="t" style="right:696px;top:258px;"><i style="letter-spacing:0.15px">9,213,621</i></span>
<span class="t" style="left:256px;top:258px;"><i style="letter-spacing:0.8px">Microsoft</i> <i style="letter-spacing:0.3px">Edge</i> <i style="letter-spacing:0.7px">...</i></span>
<span class="t" style="left:376px;top:258px;"><i style="letter-spacing:0.6px">2024/11/27</i> <i style="letter-spacing:-0.15px">21:2...</i></span>
<svg style="left:4px;top:278px" width="16" height="16" viewBox="0 0 16 16"><path d="M2.500 0.500h8l3 3v12h-11z" fill="#fff" stroke="#9a9a9a"/><path d="M10.500 0.500v3h3" fill="none" stroke="#9a9a9a"/><rect x="4" y="2.300" width="4" height="1" fill="#9a9a9a"/><rect x="0" y="5" width="16" height="9" fill="#e2001a"/><text x="8" y="12.300" font-family="'Liberation Sans',sans-serif" font-weight="bold" font-size="7.500" text-anchor="middle" fill="#fff" textLength="13" lengthAdjust="spacingAndGlyphs">PDF</text></svg>
<span class="t" style="left:22px;top:279px;"><i style="letter-spacing:0.55px">jinja</i>模板<i style="letter-spacing:-0.5px">.</i><i style="letter-spacing:1.1px">pdf</i></span>
<span class="t" style="right:696px;top:279px;"><i style="letter-spacing:0.15px">8,603,717</i></span>
<span class="t" style="left:256px;top:279px;"><i style="letter-spacing:0.8px">Microsoft</i> <i style="letter-spacing:0.3px">Edge</i> <i style="letter-spacing:0.7px">...</i></span>
<span class="t" style="left:376px;top:279px;"><i style="letter-spacing:0.65px">2024/12/8</i> <i style="letter-spacing:0.1px">9:28:33</i></span>
</div>
<span class="t" style="top:880px;left:4px;">选择了 <i style="letter-spacing:0.35px">1</i> 个文件。大小总共<i style="letter-spacing:-0.5px">:</i> <i style="letter-spacing:0.15px">4,300,117</i> 字节</span>
<div style="left:0px;top:899px;width:1631px;height:1px;background:#e3e3e3;"></div>
<div style="left:0px;top:900px;width:1631px;height:2px;background:#fbfbfb;"></div>
<div style="left:960px;top:899px;width:4px;height:3px;background:#f0f0f0;"></div>
<div style="left:957px;top:877px;width:1px;height:21px;background:#e0e0e0;"></div>
<div style="left:964px;top:485px;width:667px;height:1px;background:#a0a0a0;"></div>
<div style="left:964px;top:486px;width:667px;height:1px;background:#696969;"></div>
<div style="left:964px;top:487px;width:1px;height:413px;background:#a0a0a0;"></div>
<div style="left:965px;top:487px;width:1px;height:412px;background:#696969;"></div>
<div style="left:966px;top:487px;width:62px;height:24px;background:#f0f0f0;border-left:1px solid #fff;border-top:1px solid #fff;border-bottom:1px solid #fff;border-right:1px solid #696969;"></div>
<div style="left:1028px;top:487px;width:603px;height:24px;background:#fff;"></div>
<div style="left:964px;top:511px;width:667px;height:1px;background:#696969;"></div>
<div style="left:966px;top:511px;width:62px;height:1px;background:#1a1a1a;"></div>
<span class="t" style="top:491px;left:971px;">远程站点<i style="letter-spacing:-0.5px">:</i></span>
<span class="t" style="top:491px;left:1031px;"><i style="letter-spacing:1.75px;margin:0 -0.7px 0 0.7px">/</i><i style="letter-spacing:0.4px">var</i><i style="letter-spacing:1.75px;margin:0 -0.7px 0 0.7px">/</i><i style="letter-spacing:1.1px">ftp</i><i style="letter-spacing:1.75px;margin:0 -0.7px 0 0.7px">/</i><i style="letter-spacing:1.1px">pub</i></span>
<div style="left:964px;top:512px;width:2px;height:71px;border-left:1px solid #a0a0a0;background:#696969;"></div>
<div style="left:966px;top:512px;width:665px;height:71px;background:#fff;"></div>
<div style="left:964px;top:583px;width:667px;height:1px;background:#e3e3e3;"></div>
<div style="left:964px;top:584px;width:667px;height:1px;background:#fff;"></div>
<div style="left:996px;top:512px;width:1px;height:5px;background:repeating-linear-gradient(to bottom,#808080 0 1px,transparent 1px 2px);"></div>
<svg style="left:992px;top:518px" width="9" height="9" viewBox="0 0 9 9"><rect x="0.500" y="0.500" width="8" height="8" rx="1.500" fill="#fafafa" stroke="#919191"/><path d="M2.200 4.500h4.600" stroke="#26358f" stroke-width="1"/></svg>
<div style="left:1002px;top:522px;width:5px;height:1px;background:repeating-linear-gradient(to right,#808080 0 1px,transparent 1px 2px);"></div>
<svg style="left:1009px;top:514px" width="13" height="16" viewBox="0 0 13 16"><path d="M0.5 0.5h11v9.500h1v5.500h-12z" fill="#ffe791" stroke="#eec94e" stroke-width="1"/><path d="M10.500 15.500v-5q0-.8 .8-.8h1.200" fill="none" stroke="#eec94e"/><text x="5.500" y="12" font-family="'Liberation Sans',sans-serif" font-weight="bold" font-size="13" text-anchor="middle" fill="#000">?</text></svg>
<span class="t" style="top:514px;left:1028px;"><i style="letter-spacing:0.4px">var</i></span>
<div style="left:1015px;top:531px;width:1px;height:6px;background:repeating-linear-gradient(to bottom,#808080 0 1px,transparent 1px 2px);"></div>
<svg style="left:1011px;top:538px" width="9" height="9" viewBox="0 0 9 9"><rect x="0.500" y="0.500" width="8" height="8" rx="1.500" fill="#fafafa" stroke="#919191"/><path d="M2.200 4.500h4.600" stroke="#26358f" stroke-width="1"/></svg>
<div style="left:1021px;top:542px;width:5px;height:1px;background:repeating-linear-gradient(to right,#808080 0 1px,transparent 1px 2px);"></div>
<svg style="left:1028px;top:534px" width="13" height="16" viewBox="0 0 13 16"><path d="M0.5 0.5h11v9.500h1v5.500h-12z" fill="#ffe791" stroke="#eec94e" stroke-width="1"/><path d="M10.500 15.500v-5q0-.8 .8-.8h1.200" fill="none" stroke="#eec94e"/><text x="5.500" y="12" font-family="'Liberation Sans',sans-serif" font-weight="bold" font-size="13" text-anchor="middle" fill="#000">?</text></svg>
<span class="t" style="top:534px;left:1047px;"><i style="letter-spacing:1.1px">ftp</i></span>
<div style="left:1034px;top:551px;width:1px;height:6px;background:repeating-linear-gradient(to bottom,#808080 0 1px,transparent 1px 2px);"></div>
<div style="left:1064px;top:552.5px;width:27px;height:19px;background:#efefef;"></div>
<svg style="left:1030px;top:558px" width="9" height="9" viewBox="0 0 9 9"><rect x="0.500" y="0.500" width="8" height="8" rx="1.500" fill="#fafafa" stroke="#919191"/><path d="M2.200 4.500h4.600" stroke="#26358f" stroke-width="1"/><path d="M4.500 2.200v4.600" stroke="#26358f" stroke-width="1"/></svg>
<div style="left:1040px;top:562px;width:5px;height:1px;background:repeating-linear-gradient(to right,#808080 0 1px,transparent 1px 2px);"></div>
<svg style="left:1047px;top:554px" width="13" height="16" viewBox="0 0 13 16"><path d="M0.5 0.5h11v9.500h1v5.500h-12z" fill="#ffe791" stroke="#eec94e" stroke-width="1"/><path d="M10.500 15.500v-5q0-.8 .8-.8h1.200" fill="none" stroke="#eec94e"/></svg>
<span class="t" style="top:554px;left:1066px;"><i style="letter-spacing:1.1px">pub</i></span>
<div style="left:964px;top:589px;width:667px;height:1px;background:#a0a0a0;"></div>
<div style="left:964px;top:590px;width:667px;height:1px;background:#696969;"></div>
<div style="left:964px;top:589px;width:1px;height:310px;background:#a0a0a0;"></div>
<div style="left:965px;top:590px;width:1px;height:309px;background:#696969;"></div>
<div style="left:966px;top:591px;width:665px;height:283px;background:#fff;"></div>
<div style="left:966px;top:874px;width:665px;height:1px;background:#d6d6d6;"></div>
<div style="left:1115px;top:591px;width:1px;height:24px;background:#e5e5e5;"></div>
<div style="left:1190px;top:591px;width:1px;height:24px;background:#e5e5e5;"></div>
<div style="left:1270px;top:591px;width:1px;height:24px;background:#e5e5e5;"></div>
<div style="left:1370px;top:591px;width:1px;height:24px;background:#e5e5e5;"></div>
<div style="left:1450px;top:591px;width:1px;height:24px;background:#e5e5e5;"></div>
<div style="left:1535px;top:591px;width:1px;height:24px;background:#e5e5e5;"></div>
<svg style="left:1038px;top:591px" width="8" height="5.0" viewBox="0 0 8 5.0"><path d="M1 4.5L4.0 1.2L7 4.5" fill="none" stroke="#707070" stroke-width="1"/></svg>
<span class="t" style="top:595px;left:972px;">文件名</span>
<span class="t" style="top:595px;right:446px;">文件大小</span>
<span class="t" style="top:595px;left:1197px;">文件类型</span>
<span class="t" style="top:595px;left:1277px;">最近修改</span>
<span class="t" style="top:595px;left:1377px;">权限</span>
<span class="t" style="top:595px;left:1457px;">所有者<i style="letter-spacing:1.75px;margin:0 -0.7px 0 0.7px">/</i>组</span>
<svg style="left:972px;top:617px" width="13" height="16" viewBox="0 0 13 16"><path d="M0.5 0.5h11v9.500h1v5.500h-12z" fill="#ffe791" stroke="#eec94e" stroke-width="1"/><path d="M10.500 15.500v-5q0-.8 .8-.8h1.200" fill="none" stroke="#eec94e"/></svg>
<span class="t" style="top:618px;left:988px;"><i style="letter-spacing:-0.5px">..</i></span>
<svg style="left:972px;top:638px" width="13" height="16" viewBox="0 0 13 16"><path d="M0.5 0.5h11v9.500h1v5.500h-12z" fill="#ffe791" stroke="#eec94e" stroke-width="1"/><path d="M10.500 15.500v-5q0-.8 .8-.8h1.200" fill="none" stroke="#eec94e"/></svg>
<span class="t" style="top:639px;left:988px;"><i style="letter-spacing:0.35px">111</i></span>
<span class="t" style="top:639px;left:1197px;">文件夹</span>
<span class="t" style="top:639px;left:1277px;"><i style="letter-spacing:0.6px">2024/12/20</i> <i style="letter-spacing:-0.3px">1...</i></span>
<span class="t" style="top:639px;left:1377px;"><i style="letter-spacing:0.75px">drwxr</i><i style="letter-spacing:1.2px">-</i><i style="letter-spacing:0.4px">xr</i><i style="letter-spacing:1.2px">-</i><i style="letter-spacing:0.15px">x</i></span>
<span class="t" style="top:639px;left:1457px;"><i style="letter-spacing:0.35px">1000</i> <i style="letter-spacing:0.35px">0</i></span>
<svg style="left:972px;top:659px" width="13" height="16" viewBox="0 0 13 16"><path d="M0.5 0.5h11v9.500h1v5.500h-12z" fill="#ffe791" stroke="#eec94e" stroke-width="1"/><path d="M10.500 15.500v-5q0-.8 .8-.8h1.200" fill="none" stroke="#eec94e"/></svg>
<span class="t" style="top:660px;left:988px;"><i style="letter-spacing:0.35px">222</i></span>
<span class="t" style="top:660px;left:1197px;">文件夹</span>
<span class="t" style="top:660px;left:1277px;"><i style="letter-spacing:0.6px">2024/12/20</i> <i style="letter-spacing:-0.3px">1...</i></span>
<span class="t" style="top:660px;left:1377px;"><i style="letter-spacing:0.75px">drwxr</i><i style="letter-spacing:1.2px">-</i><i style="letter-spacing:0.4px">xr</i><i style="letter-spacing:1.2px">-</i><i style="letter-spacing:0.15px">x</i></span>
<span class="t" style="top:660px;left:1457px;"><i style="letter-spacing:0.35px">1000</i> <i style="letter-spacing:0.35px">0</i></span>
<svg style="left:972px;top:680px" width="13" height="16" viewBox="0 0 13 16"><path d="M0.5 0.5h11v9.500h1v5.500h-12z" fill="#ffe791" stroke="#eec94e" stroke-width="1"/><path d="M10.500 15.500v-5q0-.8 .8-.8h1.200" fill="none" stroke="#eec94e"/></svg>
<span class="t" style="top:681px;left:988px;"><i style="letter-spacing:0.85px">upload</i></span>
<span class="t" style="top:681px;left:1197px;">文件夹</span>
<span class="t" style="top:681px;left:1277px;"><i style="letter-spacing:0.6px">2024/12/20</i> <i style="letter-spacing:-0.3px">1...</i></span>
<span class="t" style="top:681px;left:1377px;"><i style="letter-spacing:0.65px">drwxrwxrwx</i></span>
<span class="t" style="top:681px;left:1457px;"><i style="letter-spacing:0.35px">0</i> <i style="letter-spacing:0.35px">0</i></span>
<svg style="left:972px;top:701px" width="13" height="16" viewBox="0 0 13 16"><path d="M0.500 0.500h8.500l2.500 2.500v12.500h-11z" fill="#f7f8fa" stroke="#8c8c8c"/><path d="M9 0.500v2.500h2.500" fill="none" stroke="#8c8c8c" stroke-width="0.8"/></svg>
<span class="t" style="top:702px;left:988px;"><i style="letter-spacing:1.1px">ftp</i><i style="letter-spacing:0.35px">66</i></span>
<span class="t" style="top:702px;right:446px;"><i style="letter-spacing:0.35px">11</i></span>
<span class="t" style="top:702px;left:1197px;">文件</span>
<span class="t" style="top:702px;left:1277px;"><i style="letter-spacing:0.6px">2024/12/20</i> <i style="letter-spacing:-0.3px">1...</i></span>
<span class="t" style="top:702px;left:1377px;"><i style="letter-spacing:1.2px">-</i><i style="letter-spacing:0.85px">rw</i><i style="letter-spacing:1.2px">-</i><i style="letter-spacing:0.65px">r</i><i style="letter-spacing:1.2px">--</i><i style="letter-spacing:0.65px">r</i><i style="letter-spacing:1.2px">--</i></span>
<span class="t" style="top:702px;left:1457px;"><i style="letter-spacing:0.35px">1000</i> <i style="letter-spacing:0.35px">0</i></span>
<svg style="left:970px;top:722px" width="16" height="16" viewBox="0 0 16 16"><path d="M2.500 0.500h8l3 3v12h-11z" fill="#fff" stroke="#9a9a9a"/><path d="M10.500 0.500v3h3" fill="none" stroke="#9a9a9a"/><rect x="4" y="2.300" width="4" height="1" fill="#9a9a9a"/><rect x="0" y="5" width="16" height="9" fill="#e2001a"/><text x="8" y="12.300" font-family="'Liberation Sans',sans-serif" font-weight="bold" font-size="7.500" text-anchor="middle" fill="#fff" textLength="13" lengthAdjust="spacingAndGlyphs">PDF</text></svg>
<span class="t" style="top:723px;left:988px;"><i style="letter-spacing:1.2px">go</i>语言圣经<i style="letter-spacing:1.2px">-</i>中文版<i style="letter-spacing:-0.5px">.</i><i style="letter-spacing:1.2px">p</i><i style="letter-spacing:-0.5px">...</i></span>
<span class="t" style="top:723px;right:446px;"><i style="letter-spacing:0.15px">4,300,117</i></span>
<span class="t" style="top:723px;left:1197px;"><i style="letter-spacing:0.8px">Microsoft</i><i style="letter-spacing:-0.5px">...</i></span>
<div style="left:986px;top:741px;width:550px;height:21px;background:#f0f0f0;"></div>
<svg style="left:972px;top:743px" width="13" height="16" viewBox="0 0 13 16"><path d="M0.500 0.500h8.500l2.500 2.500v12.500h-11z" fill="#bfdaf1" stroke="#6b8fb3"/><path d="M9 0.500v2.500h2.500" fill="none" stroke="#6b8fb3" stroke-width="0.8"/></svg>
<span class="t" style="top:744px;left:988px;">成功写入文件<i style="letter-spacing:0.35px">!</i></span>
<span class="t" style="top:744px;right:446px;"><i style="letter-spacing:0.35px">0</i></span>
<span class="t" style="top:744px;left:1197px;">文件</span>
<span class="t" style="top:744px;left:1277px;"><i style="letter-spacing:0.6px">2024/12/20</i> <i style="letter-spacing:-0.3px">1...</i></span>
<span class="t" style="top:744px;left:1377px;"><i style="letter-spacing:1.2px">-</i><i style="letter-spacing:0.85px">rw</i><i style="letter-spacing:1.2px">-</i><i style="letter-spacing:0.65px">r</i><i style="letter-spacing:1.2px">--</i><i style="letter-spacing:0.65px">r</i><i style="letter-spacing:1.2px">--</i></span>
<span class="t" style="top:744px;left:1457px;"><i style="letter-spacing:0.35px">1000</i> <i style="letter-spacing:0.35px">0</i></span>
<span class="t" style="top:880px;left:968px;">选择了 <i style="letter-spacing:0.35px">1</i> 个文件。大小总共<i style="letter-spacing:-0.5px">:</i> <i style="letter-spacing:0.35px">0</i> 字节</span>
<div style="left:0px;top:583px;width:960px;height:1px;background:#e3e3e3;"></div>
<div style="left:0px;top:584px;width:960px;height:1px;background:#fff;"></div>
<div style="left:0px;top:585px;width:960px;height:4px;background:#f0f0f0;"></div>
<div style="left:0px;top:589px;width:960px;height:1px;background:#a0a0a0;"></div>
<div style="left:1px;top:590px;width:959px;height:1px;background:#696969;"></div>
<div style="left:0px;top:590px;width:1px;height:1px;background:#a0a0a0;"></div>
<div style="left:964px;top:583px;width:667px;height:1px;background:#e3e3e3;"></div>
<div style="left:964px;top:584px;width:667px;height:1px;background:#fff;"></div>
<div style="left:964px;top:585px;width:667px;height:4px;background:#f0f0f0;"></div>
<div style="left:964px;top:589px;width:667px;height:1px;background:#a0a0a0;"></div>
<div style="left:965px;top:590px;width:666px;height:1px;background:#696969;"></div>
<div style="left:964px;top:590px;width:1px;height:1px;background:#a0a0a0;"></div>
<div style="left:958px;top:589px;width:1px;height:2px;background:#e3e3e3;"></div>
<div style="left:959px;top:589px;width:1px;height:2px;background:#fff;"></div>
</body></html>
